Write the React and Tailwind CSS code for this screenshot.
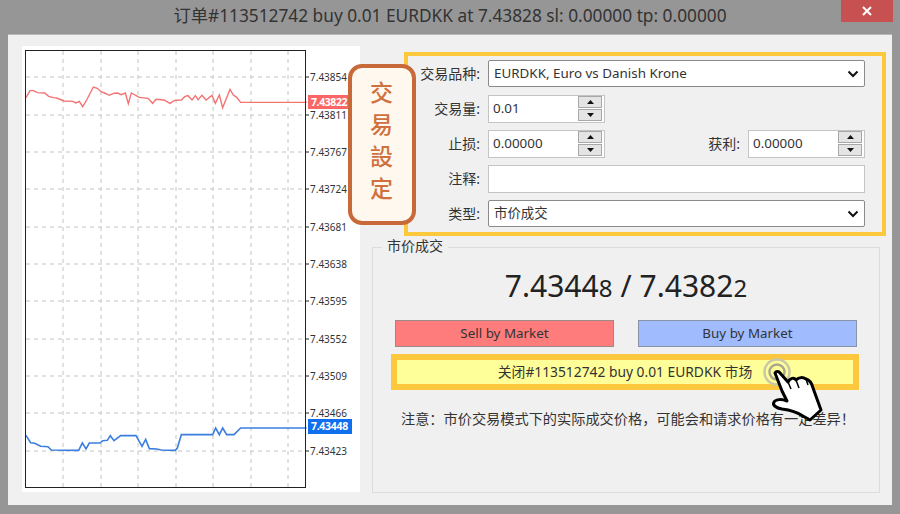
import React from "react";

const FONT = "font-['Noto_Sans','Noto_Sans_CJK_SC',sans-serif]";

const gridX = [63, 101, 138, 176, 213, 251, 288];
const axis = [
  [77, "7.43854"],
  [115, "7.43811"],
  [152, "7.43767"],
  [189, "7.43724"],
  [227, "7.43681"],
  [264, "7.43638"],
  [301, "7.43595"],
  [339, "7.43552"],
  [376, "7.43509"],
  [413, "7.43466"],
  [451, "7.43423"],
];

// traced from the chart, zoomed 3x
const askLine = [[18,83],[30,62],[40,62],[52,68],[74,69],[86,79],[100,83],[110,84],[132,93],[158,94],[168,99],[178,94],[188,110],[200,90],[220,51],[232,55],[244,66],[254,69],[268,76],[280,70],[292,69],[304,74],[316,69],[325,101],[334,69],[358,82],[384,85],[398,100],[408,88],[432,90],[450,100],[464,91],[484,90],[494,80],[504,77],[516,90],[526,77],[534,89],[546,76],[558,90],[576,76],[586,100],[598,75],[608,113],[630,58],[640,75],[650,82],[662,97],[860,97]];
const bidLine = [[18,46],[32,68],[44,70],[62,79],[84,80],[94,90],[176,91],[187,69],[198,87],[208,69],[240,69],[248,62],[262,61],[271,47],[282,62],[302,47],[348,47],[366,79],[377,58],[388,86],[410,87],[424,90],[466,91],[472,84],[484,44],[578,44],[587,24],[598,44],[608,24],[620,44],[642,44],[662,24],[860,24]];

const toPoints = (line, top) =>
  line.map(([x, y]) => `${20 + x / 3},${top + y / 3}`).join(" ");

function Chart() {
  return (
    <div className="relative w-[338px] h-[446px] bg-white shrink-0">
      <svg viewBox="22 46 338 446" className="block w-[338px] h-[446px]">
        {gridX.map((x) => (
          <line key={x} x1={x} x2={x} y1="51" y2="488" stroke="#c4c4c4" strokeWidth="1" strokeDasharray="4 4" />
        ))}
        {axis.map(([y]) => (
          <line key={y} x1="26" x2="304" y1={y} y2={y} stroke="#c4c4c4" strokeWidth="1" strokeDasharray="4 4" />
        ))}
        <polyline points={toPoints(askLine, 70)} fill="none" stroke="#f47373" strokeWidth="1.4" />
        <polyline points={toPoints(bidLine, 420)} fill="none" stroke="#3a7fe0" strokeWidth="1.6" />
        <rect x="25.5" y="50.5" width="280" height="437" fill="none" stroke="#222" strokeWidth="1" />
        {axis.map(([y, label]) => (
          <g key={label}>
            <line x1="305" x2="309" y1={y} y2={y} stroke="#222" strokeWidth="1" />
            <text x="310" y={y + 4} fontSize="10.5" textLength="37" lengthAdjust="spacingAndGlyphs" fill="#333" fontFamily="Noto Sans, sans-serif">{label}</text>
          </g>
        ))}
      </svg>
      <div className="absolute left-[286px] top-[49px] w-[40px] h-[14px] bg-[#fb6767] text-white text-[10.5px] tracking-[-0.4px] leading-[14px] font-bold pl-[3px]">7.43822</div>
      <div className="absolute left-[286px] top-[373px] w-[44px] h-[15px] bg-[#0f6fee] text-white text-[10.5px] tracking-[-0.3px] leading-[15px] font-bold pl-[3px]">7.43448</div>
    </div>
  );
}

function Field({ label, className = "", children }) {
  return (
    <div className={`flex items-center h-[27px] ${className}`}>
      <span className="w-[72px] mr-[8px] text-right text-[14px] text-[#333] whitespace-nowrap">{label}</span>
      {children}
    </div>
  );
}

function Select({ value }) {
  return (
    <div className="flex items-center justify-between w-[377px] h-[27px] bg-white border border-[#8a8a8a] rounded-[2px] pl-[5px] pr-[4px] text-[13.4px] text-[#333]">
      <span>{value}</span>
      <svg width="14" height="14" viewBox="0 0 14 14" fill="none">
        <path d="M2.5 4.5 7 9l4.5-4.5" stroke="#111" strokeWidth="2" />
      </svg>
    </div>
  );
}

function Spinner({ value }) {
  return (
    <div className="flex items-center justify-between w-[117px] h-[28px] bg-white border border-[#c4c4c4] pl-[4px] pr-[1px] text-[13.4px] text-[#333]">
      <span>{value}</span>
      <div className="flex flex-col gap-px w-[24px] mr-[1px]">
        <div className="flex items-center justify-center h-[12px] bg-[#e4e4e4] border border-[#a8a8a8]">
          <svg width="7" height="4" viewBox="0 0 7 4"><path d="M3.5 0 7 4H0z" fill="#111" /></svg>
        </div>
        <div className="flex items-center justify-center h-[12px] bg-[#e4e4e4] border border-[#a8a8a8]">
          <svg width="7" height="4" viewBox="0 0 7 4"><path d="M0 0h7L3.5 4z" fill="#111" /></svg>
        </div>
      </div>
    </div>
  );
}

function OrderForm() {
  return (
    <div className="flex flex-col gap-[8px] w-[482px] h-[184px] ml-[32px] border-4 border-[#fcc93c] pt-[4px]">
      <Field label="交易品种:"><Select value="EURDKK, Euro vs Danish Krone" /></Field>
      <Field label="交易量:"><Spinner value="0.01" /></Field>
      <Field label="止损:">
        <Spinner value="0.00000" />
        <span className="w-[135px] mr-[8px] text-right text-[14px] text-[#333]">获利:</span>
        <Spinner value="0.00000" />
      </Field>
      <Field label="注释:">
        <div className="w-[377px] h-[28px] bg-white border border-[#c4c4c4]" />
      </Field>
      <Field label="类型:"><Select value="市价成交" /></Field>
    </div>
  );
}

function MarketGroup() {
  return (
    <div className="relative flex flex-col w-[508px] h-[246px] mt-[11px] border border-[#dcdcdc]">
      <span className="absolute left-[9px] top-[-11px] px-[5px] bg-[#f0f0f0] text-[14px] leading-[18px] text-[#333]">市价成交</span>
      <div className="flex justify-center items-baseline mt-[19px] h-[38px] text-[30px] leading-[38px] text-[#222]">
        <span>7.4344<span className="text-[24px]">8</span></span>
        <span className="mx-[8px]">/</span>
        <span>7.4382<span className="text-[24px]">2</span></span>
      </div>
      <div className="flex justify-between mt-[15px] mx-[22px]">
        <div className="flex items-center justify-center w-[219px] h-[27px] bg-[#ff7c7c] border border-[#9c8a8a] text-[13.4px] text-[#333]">Sell by Market</div>
        <div className="flex items-center justify-center w-[219px] h-[27px] bg-[#a0bcff] border border-[#8a94a8] text-[13.4px] text-[#333]">Buy by Market</div>
      </div>
      <div className="flex items-center justify-center w-[468px] h-[36px] mt-[7px] ml-[18px] bg-[#ffff99] border-[6px] border-[#fdc83e] text-[13.8px] text-[#333]">
        关闭#113512742 buy 0.01 EURDKK 市场
      </div>
      <p className="mt-[20px] pl-[4px] text-center text-[14.2px] leading-[18px] text-[#333]">注意：市价交易模式下的实际成交价格，可能会和请求价格有一定差异！</p>
    </div>
  );
}

function Callout() {
  return (
    <div className="absolute left-[340px] top-[29px] flex flex-col items-center justify-center gap-[7px] w-[68px] h-[161px] pb-[8px] pr-[1px] bg-[#fff8ee] border-[4px] border-[#c8693a] rounded-[14px] text-[23px] leading-[25px] font-medium text-[#d0703f]">
      <span>交</span>
      <span>易</span>
      <span>設</span>
      <span>定</span>
    </div>
  );
}

function ClickHand() {
  return (
    <svg className="absolute left-[756px] top-[356px]" width="76" height="72" viewBox="756 356 76 72">
      <circle cx="777" cy="372" r="12.5" fill="none" stroke="#c9c7a4" strokeWidth="2.5" />
      <circle cx="777" cy="372" r="7.5" fill="none" stroke="#a9a88f" strokeWidth="2.5" />
      <path
        d="M775 373C776 371 779 371 780 373L788 382C790 378 794 377 796 380C799 377 803 377 806 379C810 380 812 384 813 388L821 410L810 420L803 416C797 412 790 410 782 409C776 408 772 405 774 402C776 399 782 399 787 401L782 391Z"
        fill="#fff"
        stroke="#000"
        strokeWidth="3"
        strokeLinejoin="round"
      />
      <path d="M788 382l3 7M796 380l3 8M806 379l2 6" fill="none" stroke="#000" strokeWidth="1.5" />
    </svg>
  );
}

export default function App() {
  return (
    <div className={`relative w-[900px] h-[514px] overflow-hidden bg-[#969696] ${FONT}`}>
      <div className="relative flex items-center justify-center h-[34px] pb-[2px] text-[17.3px] text-[#333]">
        <span>订单#113512742 buy 0.01 EURDKK at 7.43828 sl: 0.00000 tp: 0.00000</span>
        <div className="absolute right-[7px] top-0 flex items-center justify-center w-[52px] h-[22px] bg-[#c75050] text-white">
          <svg width="10" height="10" viewBox="0 0 10 10"><path d="M1 1l8 8M9 1L1 9" stroke="#fff" strokeWidth="2" /></svg>
        </div>
      </div>
      <div className="relative flex ml-[8px] w-[884px] h-[471px] bg-[#f0f0f0] border-t border-[#b8b8b8] pt-[11px] pl-[14px]">
        <Chart />
        <div className="flex flex-col ml-[12px] pt-[6px]">
          <OrderForm />
          <MarketGroup />
        </div>
        <Callout />
      </div>
      <ClickHand />
    </div>
  );
}
